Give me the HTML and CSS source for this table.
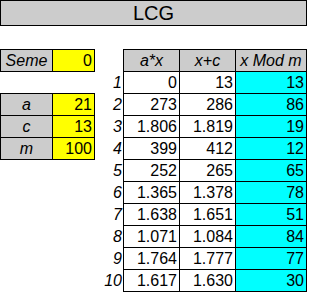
FILE: index.html
```html
<!DOCTYPE html>
<html>
<head>
<meta charset="utf-8">
<link rel="stylesheet" href="styles.css">
</head>
<body>
<div class="title">LCG</div>
<div class="sheet">
  <div class="left">
    <div class="pgrid seme">
      <div class="lbl top">Seme</div><div class="val top">0</div>
    </div>
    <div class="pgrid params">
      <div class="lbl top">a</div><div class="val top">21</div>
      <div class="lbl">c</div><div class="val">13</div>
      <div class="lbl">m</div><div class="val">100</div>
    </div>
  </div>
  <div class="main">
    <div class="rn"></div><div class="hd c1 top">a*x</div><div class="hd top">x+c</div><div class="hd top">x Mod m</div>
    <div class="rn">1</div><div class="num c1">0</div><div class="num">13</div><div class="num cy">13</div>
    <div class="rn">2</div><div class="num c1">273</div><div class="num">286</div><div class="num cy">86</div>
    <div class="rn">3</div><div class="num c1">1.806</div><div class="num">1.819</div><div class="num cy">19</div>
    <div class="rn">4</div><div class="num c1">399</div><div class="num">412</div><div class="num cy">12</div>
    <div class="rn">5</div><div class="num c1">252</div><div class="num">265</div><div class="num cy">65</div>
    <div class="rn">6</div><div class="num c1">1.365</div><div class="num">1.378</div><div class="num cy">78</div>
    <div class="rn">7</div><div class="num c1">1.638</div><div class="num">1.651</div><div class="num cy">51</div>
    <div class="rn">8</div><div class="num c1">1.071</div><div class="num">1.084</div><div class="num cy">84</div>
    <div class="rn">9</div><div class="num c1">1.764</div><div class="num">1.777</div><div class="num cy">77</div>
    <div class="rn">10</div><div class="num c1">1.617</div><div class="num">1.630</div><div class="num cy">30</div>
  </div>
</div>
</body>
</html>
```
FILE: styles.css
```css
html, body {
  margin: 0;
  padding: 0;
  background: #fff;
}
body {
  font-family: "Liberation Sans", Arial, sans-serif;
  font-size: 16px;
  color: #000;
}
.title {
  box-sizing: border-box;
  width: 307px;
  height: 26px;
  border: 1px solid #000;
  background: #cccccc;
  text-align: center;
  font-size: 20px;
  line-height: 24px;
}
.sheet {
  display: flex;
  margin-top: 23px;
}
.left {
  width: 95px;
  display: flex;
  flex-direction: column;
}
.pgrid {
  display: grid;
  grid-template-columns: 53px 42px;
}
.params {
  margin-top: 21px;
}
.pgrid > div {
  box-sizing: border-box;
  height: 22px;
  line-height: 21px;
  border-right: 1px solid #000;
  border-bottom: 1px solid #000;
}
.pgrid > .top {
  height: 23px;
  border-top: 1px solid #000;
}
.lbl {
  background: #cccccc;
  border-left: 1px solid #000;
  font-style: italic;
  text-align: center;
}
.val {
  background: #ffff00;
  text-align: right;
  padding-right: 2px;
}
.main {
  margin-left: 8px;
  display: grid;
  grid-template-columns: 20px 57px 56px 71px;
}
.main > div {
  box-sizing: border-box;
  height: 22px;
  line-height: 21px;
}
.main > .top {
  height: 23px;
  border-top: 1px solid #000;
}
.rn {
  font-style: italic;
  text-align: right;
  padding-right: 1px;
}
.hd, .num {
  border-right: 1px solid #000;
  border-bottom: 1px solid #000;
}
.c1 {
  border-left: 1px solid #000;
}
.hd {
  background: #cccccc;
  font-style: italic;
  text-align: center;
}
.num {
  text-align: right;
  padding-right: 2px;
}
.cy {
  background: #00ffff;
}
```
